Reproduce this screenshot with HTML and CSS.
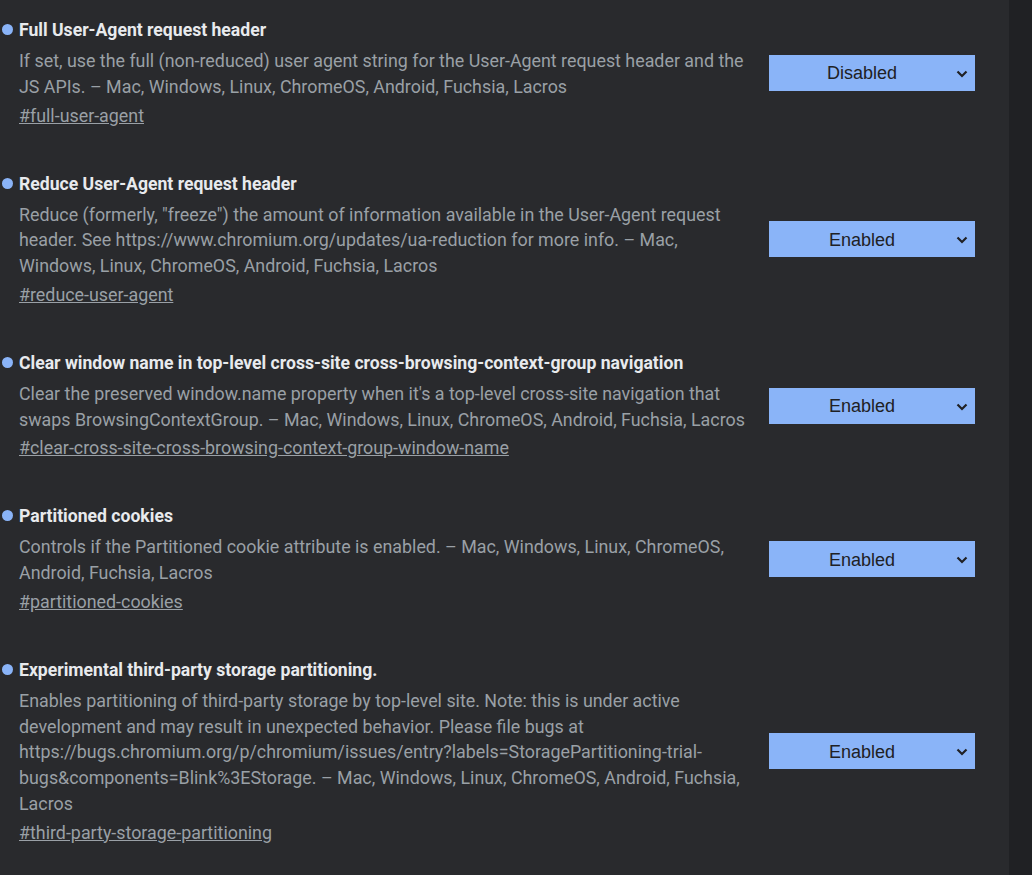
FILE: index.html
```html
<!DOCTYPE html>
<html lang="en">
<head>
<meta charset="utf-8">
<title>Experiments</title>
<link rel="stylesheet" href="styles.css">
</head>
<body>
<div class="page">
  <main class="list">
    <div class="exp">
      <div class="info">
        <h3 class="title">Full User-Agent request header</h3>
        <p class="desc">If set, use the full (non-reduced) user agent string for the User-Agent request header and the JS APIs. – Mac, Windows, Linux, ChromeOS, Android, Fuchsia, Lacros</p>
        <a class="link" href="#full-user-agent">#full-user-agent</a>
      </div>
      <div class="select"><span class="val">Disabled</span><svg class="chev" viewBox="0 0 12 8" width="12" height="8"><path d="M1.5 1.5 L6 6 L10.5 1.5" fill="none" stroke="#202124" stroke-width="2.2"/></svg></div>
    </div>
    <div class="exp">
      <div class="info">
        <h3 class="title">Reduce User-Agent request header</h3>
        <p class="desc">Reduce (formerly, "freeze") the amount of information available in the User-Agent request header. See https://www.chromium.org/updates/ua-reduction for more info. – Mac, Windows, Linux, ChromeOS, Android, Fuchsia, Lacros</p>
        <a class="link" href="#reduce-user-agent">#reduce-user-agent</a>
      </div>
      <div class="select"><span class="val">Enabled</span><svg class="chev" viewBox="0 0 12 8" width="12" height="8"><path d="M1.5 1.5 L6 6 L10.5 1.5" fill="none" stroke="#202124" stroke-width="2.2"/></svg></div>
    </div>
    <div class="exp">
      <div class="info">
        <h3 class="title">Clear window name in top-level cross-site cross-browsing-context-group navigation</h3>
        <p class="desc">Clear the preserved window.name property when it's a top-level cross-site navigation that swaps BrowsingContextGroup. – Mac, Windows, Linux, ChromeOS, Android, Fuchsia, Lacros</p>
        <a class="link" href="#clear-cross-site-cross-browsing-context-group-window-name">#clear-cross-site-cross-browsing-context-group-window-name</a>
      </div>
      <div class="select"><span class="val">Enabled</span><svg class="chev" viewBox="0 0 12 8" width="12" height="8"><path d="M1.5 1.5 L6 6 L10.5 1.5" fill="none" stroke="#202124" stroke-width="2.2"/></svg></div>
    </div>
    <div class="exp">
      <div class="info">
        <h3 class="title">Partitioned cookies</h3>
        <p class="desc">Controls if the Partitioned cookie attribute is enabled. – Mac, Windows, Linux, ChromeOS, Android, Fuchsia, Lacros</p>
        <a class="link" href="#partitioned-cookies">#partitioned-cookies</a>
      </div>
      <div class="select"><span class="val">Enabled</span><svg class="chev" viewBox="0 0 12 8" width="12" height="8"><path d="M1.5 1.5 L6 6 L10.5 1.5" fill="none" stroke="#202124" stroke-width="2.2"/></svg></div>
    </div>
    <div class="exp">
      <div class="info">
        <h3 class="title">Experimental third-party storage partitioning.</h3>
        <p class="desc">Enables partitioning of third-party storage by top-level site. Note: this is under active development and may result in unexpected behavior. Please file bugs at https://bugs.chromium.org/p/chromium/issues/entry?labels=StoragePartitioning-trial-bugs&amp;components=Blink%3EStorage. – Mac, Windows, Linux, ChromeOS, Android, Fuchsia, Lacros</p>
        <a class="link" href="#third-party-storage-partitioning">#third-party-storage-partitioning</a>
      </div>
      <div class="select"><span class="val">Enabled</span><svg class="chev" viewBox="0 0 12 8" width="12" height="8"><path d="M1.5 1.5 L6 6 L10.5 1.5" fill="none" stroke="#202124" stroke-width="2.2"/></svg></div>
    </div>
  </main>
  <div class="track"></div>
</div>
</body>
</html>
```
FILE: styles.css
```css
html, body {
  margin: 0;
  padding: 0;
  height: 100%;
  background: #292a2d;
  overflow: hidden;
}
.page {
  display: flex;
  height: 875px;
}
.list {
  width: 1009px;
  padding: 17px 0 0 19px;
  box-sizing: border-box;
  font-family: Roboto, "Liberation Sans", sans-serif;
  font-size: 17.85px;
  line-height: 26px;
  display: flex;
  flex-direction: column;
  gap: 42px;
}
.track {
  flex: 1;
  background: #202124;
}
.exp {
  display: flex;
  align-items: center;
  gap: 19px;
}
.info {
  width: 731px;
  display: flex;
  flex-direction: column;
}
.title {
  margin: 0 0 5px 0;
  font-size: 17.6px;
  font-weight: 700;
  color: #e8eaed;
  line-height: 26px;
}
.title::before {
  content: "";
  display: inline-block;
  width: 11px;
  height: 11px;
  border-radius: 50%;
  background: #8ab4f8;
  margin-left: -17px;
  margin-right: 6px;
  vertical-align: 1px;
}
.desc {
  margin: 0 0 3px 0;
  color: #9aa0a6;
  line-height: 25.75px;
}
.link {
  color: #9aa0a6;
  text-decoration: underline;
  align-self: flex-start;
}
.select {
  width: 206px;
  height: 36px;
  background: #8ab4f8;
  display: flex;
  align-items: center;
  justify-content: center;
  font-family: "Liberation Sans", Arial, sans-serif;
  font-size: 18px;
  color: #202124;
  position: relative;
}
.val {
  margin-right: 20px;
  padding-top: 1px;
}
.chev {
  position: absolute;
  right: 7px;
  top: 15px;
}
```
